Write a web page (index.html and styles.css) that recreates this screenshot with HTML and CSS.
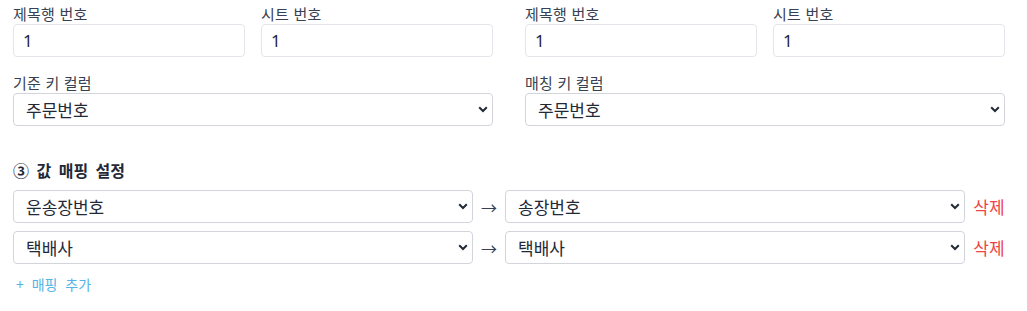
FILE: index.html
```html
<!DOCTYPE html>
<html lang="ko">
<head>
<meta charset="utf-8">
<link rel="stylesheet" href="styles.css">
</head>
<body>
<div class="page">
  <div class="cols">
    <div class="col">
      <div class="pair">
        <div class="field">
          <label class="lbl">제목행 번호</label>
          <input class="inp" type="text" value="1">
        </div>
        <div class="field">
          <label class="lbl">시트 번호</label>
          <input class="inp" type="text" value="1">
        </div>
      </div>
      <div class="field key">
        <label class="lbl">기준 키 컬럼</label>
        <select class="sel"><option>주문번호</option></select>
      </div>
    </div>
    <div class="col">
      <div class="pair">
        <div class="field">
          <label class="lbl">제목행 번호</label>
          <input class="inp" type="text" value="1">
        </div>
        <div class="field">
          <label class="lbl">시트 번호</label>
          <input class="inp" type="text" value="1">
        </div>
      </div>
      <div class="field key">
        <label class="lbl">매칭 키 컬럼</label>
        <select class="sel"><option>주문번호</option></select>
      </div>
    </div>
  </div>

  <h3 class="section">③ 값 매핑 설정</h3>
  <div class="maps">
    <div class="map-row">
      <select class="sel grow"><option>운송장번호</option></select>
      <span class="arrow">→</span>
      <select class="sel grow"><option>송장번호</option></select>
      <button class="del">삭제</button>
    </div>
    <div class="map-row">
      <select class="sel grow"><option>택배사</option></select>
      <span class="arrow">→</span>
      <select class="sel grow"><option>택배사</option></select>
      <button class="del">삭제</button>
    </div>
  </div>
  <button class="add">+ 매핑 추가</button>
</div>
</body>
</html>
```
FILE: styles.css
```css
* { box-sizing: border-box; }
html, body { margin: 0; padding: 0; background: #fff; }
body {
  font-family: "Noto Sans CJK KR", "Noto Sans", sans-serif;
  color: #1f2937;
}
.page {
  width: 1005px;
  padding: 4px 0 0 13px;
}
.cols {
  display: grid;
  grid-template-columns: 480px 480px;
  column-gap: 32px;
}
.col { display: flex; flex-direction: column; min-width: 0; }
.pair {
  display: grid;
  grid-template-columns: minmax(0, 1fr) minmax(0, 1fr);
  column-gap: 16px;
}
.field { display: flex; flex-direction: column; min-width: 0; }
.field.key { margin-top: 16px; }
.lbl {
  font-size: 15px;
  line-height: 20px;
  color: #374151;
  letter-spacing: 0.2px;
}
.inp, .sel {
  font-family: inherit;
  font-size: 17px;
  line-height: 21px;
  height: 33px;
  color: #1f2937;
  background-color: #fff;
  border-radius: 4px;
  margin: 0;
  width: 100%;
  min-width: 0;
}
.inp {
  font-family: "Noto Sans", "Noto Sans CJK KR", sans-serif;
  border: 1px solid #e3e5ea;
  padding: 5px 9px;
  outline: none;
  color: #1e2440;
}
.sel {
  -webkit-appearance: none;
  appearance: none;
  border: 1px solid #d1d5db;
  padding: 5px 28px 5px 12px;
  background-image: url("data:image/svg+xml,%3Csvg xmlns='http://www.w3.org/2000/svg' width='10' height='7' viewBox='0 0 10 7'%3E%3Cpath d='M1.2 1.3 L5 5 L8.8 1.3' fill='none' stroke='%23222a36' stroke-width='2'/%3E%3C/svg%3E");
  background-repeat: no-repeat;
  background-position: right 4px center;
  background-size: 10px 7px;
}
.section {
  margin: 34px 0 10px;
  font-size: 16px;
  line-height: 20px;
  font-weight: 700;
  color: #1f2937;
  word-spacing: 3px;
}
.maps {
  display: flex;
  flex-direction: column;
  gap: 8px;
  width: 992px;
}
.map-row {
  display: flex;
  align-items: center;
  gap: 8px;
}
.grow { flex: 1; min-width: 0; width: auto; }
.arrow {
  width: 16px;
  font-size: 16px;
  line-height: 20px;
  color: #374151;
  text-align: center;
}
.del {
  border: 0;
  background: none;
  padding: 0;
  font-family: inherit;
  font-size: 17px;
  line-height: 20px;
  color: #ef4444;
  width: 32px;
  white-space: nowrap;
}
.add {
  display: block;
  margin: 10px 0 0 3px;
  border: 0;
  background: none;
  padding: 0;
  font-family: inherit;
  font-size: 14px;
  line-height: 20px;
  color: #55b4e2;
  word-spacing: 4px;
}
```
